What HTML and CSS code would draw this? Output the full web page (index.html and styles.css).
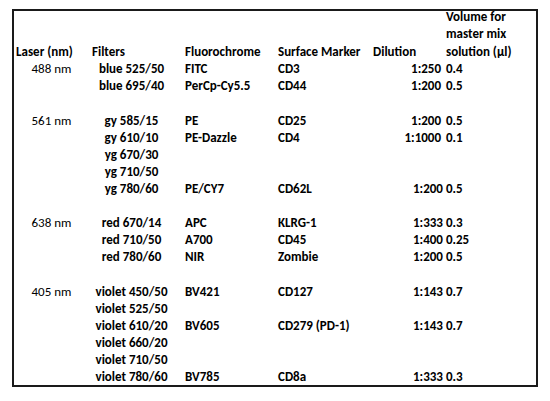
FILE: index.html
```html
<!DOCTYPE html>
<html>
<head>
<meta charset="utf-8">
<link rel="stylesheet" href="styles.css">
</head>
<body>
<div class="sheet">
<table class="grid">
<colgroup>
<col class="c1"><col class="c2"><col class="c3"><col class="c4"><col class="c5"><col class="c6">
</colgroup>
<tr class="head">
<td class="laser-h">Laser (nm)</td>
<td class="filt-h">Filters</td>
<td class="txt">Fluorochrome</td>
<td class="txt">Surface Marker</td>
<td class="dil-h">Dilution</td>
<td class="vol"><div class="vl vl1">Volume for</div><div class="vl vl2">master mix</div><div class="vl3">solution (µl)</div></td>
</tr>
<tr><td class="laser">488 nm</td><td class="filt">blue 525/50</td><td class="txt">FITC</td><td class="txt">CD3</td><td class="dil">1:250</td><td class="vol">0.4</td></tr>
<tr><td></td><td class="filt">blue 695/40</td><td class="txt">PerCp-Cy5.5</td><td class="txt">CD44</td><td class="dil">1:200</td><td class="vol">0.5</td></tr>
<tr><td colspan="6"></td></tr>
<tr><td class="laser">561 nm</td><td class="filt">gy 585/15</td><td class="txt">PE</td><td class="txt">CD25</td><td class="dil">1:200</td><td class="vol">0.5</td></tr>
<tr><td></td><td class="filt">gy 610/10</td><td class="txt">PE-Dazzle</td><td class="txt">CD4</td><td class="dil">1:1000</td><td class="vol">0.1</td></tr>
<tr><td></td><td class="filt">yg 670/30</td><td></td><td></td><td></td><td></td></tr>
<tr><td></td><td class="filt">yg 710/50</td><td></td><td></td><td></td><td></td></tr>
<tr><td></td><td class="filt">yg 780/60</td><td class="txt">PE/CY7</td><td class="txt">CD62L</td><td class="mix" colspan="2">1:200 0.5</td></tr>
<tr><td colspan="6"></td></tr>
<tr><td class="laser">638 nm</td><td class="filt">red 670/14</td><td class="txt">APC</td><td class="txt">KLRG-1</td><td class="mix" colspan="2">1:333 0.3</td></tr>
<tr><td></td><td class="filt">red 710/50</td><td class="txt">A700</td><td class="txt">CD45</td><td class="mix" colspan="2">1:400 0.25</td></tr>
<tr><td></td><td class="filt">red 780/60</td><td class="txt">NIR</td><td class="txt">Zombie</td><td class="mix" colspan="2">1:200 0.5</td></tr>
<tr><td colspan="6"></td></tr>
<tr><td class="laser">405 nm</td><td class="filt">violet 450/50</td><td class="txt">BV421</td><td class="txt">CD127</td><td class="mix" colspan="2">1:143 0.7</td></tr>
<tr><td></td><td class="filt">violet 525/50</td><td></td><td></td><td></td><td></td></tr>
<tr><td></td><td class="filt">violet 610/20</td><td class="txt">BV605</td><td class="txt">CD279 (PD-1)</td><td class="mix" colspan="2">1:143 0.7</td></tr>
<tr><td></td><td class="filt">violet 660/20</td><td></td><td></td><td></td><td></td></tr>
<tr><td></td><td class="filt">violet 710/50</td><td></td><td></td><td></td><td></td></tr>
<tr><td></td><td class="filt">violet 780/60</td><td class="txt">BV785</td><td class="txt">CD8a</td><td class="mix" colspan="2">1:333 0.3</td></tr>
</table>
</div>
</body>
</html>
```

FILE: styles.css
```css
html, body {
  margin: 0;
  padding: 0;
  background: #ffffff;
}
body {
  font-family: "Carlito", "Lato", "Liberation Sans", sans-serif;
  font-size: 13px;
  color: #000;
}
.sheet {
  margin: 9px 0 0 12px;
  width: 522px;
  border: 2px solid #1a1a1a;
}
.grid {
  border-collapse: collapse;
  table-layout: fixed;
  width: 522px;
  margin-top: 1px;
}
.c1 { width: 75px; }
.c2 { width: 93px; }
.c3 { width: 93px; }
.c4 { width: 95px; }
.c5 { width: 73px; }
.c6 { width: 93px; }
.grid td {
  padding: 0;
  height: 17.1px;
  line-height: 17.1px;
  white-space: nowrap;
  vertical-align: bottom;
  font-weight: 700;
  overflow: visible;
}
.grid tr.head td {
  height: 48.4px;
}
.laser-h { padding-left: 2px !important; }
.filt-h { padding-left: 3px !important; }
.dil-h { padding-left: 3px !important; }
.laser {
  font-weight: 400 !important;
  text-align: center;
}
.filt {
  text-align: center;
  padding-right: 8px !important;
}
.txt { padding-left: 3px !important; }
.dil {
  text-align: right;
  padding-right: 2px !important;
}
.vol { padding-left: 3px !important; }
.vl { line-height: 17px; }
.vl1 { margin-top: -5px; }
.vl3 { margin-top: 1px; line-height: 17.1px; }
.mix { padding-left: 43px !important; }
```
